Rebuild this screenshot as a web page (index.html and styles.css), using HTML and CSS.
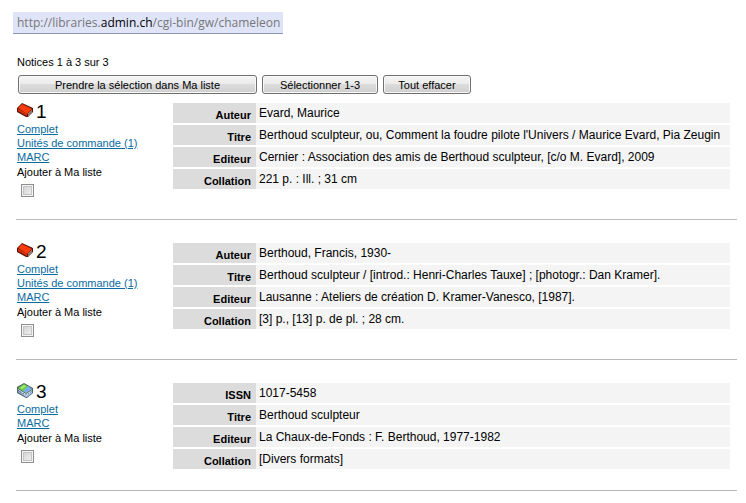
FILE: index.html
```html
<!DOCTYPE html>
<html lang="fr">
<head>
  <meta charset="UTF-8">
  <meta name="viewport" content="width=device-width, initial-scale=1.0">
  <title>Notices</title>
  <link rel="stylesheet" href="styles.css">
</head>
<body>
  <svg class="defs" width="0" height="0">
    <!-- closed red book -->
    <symbol id="book" viewBox="0 0 16 16">
      <path d="M0 6 L5 1 L16 6 L16 10 L11 15 L9 15 L0 10 Z" fill="#5a1408"/>
      <path d="M1 6 L5 2 L15 7 L10 12 Z" fill="#fc3c0c"/>
      <path d="M1 7 L10 12 L10 14 L1 9 Z" fill="#e83008"/>
      <path d="M11 12 L15 8 L15 10 L11 14 Z" fill="#e8dcd8"/>
      <path d="M11 13 L15 9" stroke="#777" fill="none"/>
    </symbol>
    <!-- stack of periodical issues -->
    <symbol id="serial" viewBox="0 0 16 16">
      <path d="M0 5 L7 1 L16 6 L16 11 L10 16 L9 16 L0 11 Z" fill="#4c6468"/>
      <path d="M1 9 L9 14 L15 9 L15 11 L10 15 L9 15 L1 10 Z" fill="#a8c8f8"/>
      <path d="M1 7 L9 12 L15 8 L15 9 L9 14 L1 8 Z" fill="#f4f8ff"/>
      <path d="M1 6 L7 2 L15 7 L9 11 Z" fill="#70d040"/>
      <path d="M11 4 L15 7 L9 11 L6 9 Z" fill="#78acf0"/>
      <path d="M3 6 L7 3 L9 4 L5 7 Z" fill="#a4ec70"/>
      <path d="M1 8 L9 13 L15 9" stroke="#567" stroke-dasharray="1 1" fill="none"/>
    </symbol>
  </svg>

  <div class="address">http://libraries.<b>admin.ch</b>/cgi-bin/gw/chameleon</div>

  <form class="results">
    <p class="count">Notices 1 à 3 sur 3</p>
    <div class="actions">
      <button type="button" class="btn-wide">Prendre la sélection dans Ma liste</button>
      <button type="button">Sélectionner 1-3</button>
      <button type="button">Tout effacer</button>
    </div>

    <div class="record">
      <div class="side">
        <div class="number"><svg class="icon"><use href="#book"/></svg>1</div>
        <a href="#">Complet</a>
        <a href="#">Unités de commande (1)</a>
        <a href="#">MARC</a>
        <label for="sel1">Ajouter à Ma liste</label>
        <input type="checkbox" id="sel1">
      </div>
      <table class="fields">
        <tr><th>Auteur</th><td>Evard, Maurice</td></tr>
        <tr><th>Titre</th><td>Berthoud sculpteur, ou, Comment la foudre pilote l'Univers / Maurice Evard, Pia Zeugin</td></tr>
        <tr><th>Editeur</th><td>Cernier : Association des amis de Berthoud sculpteur, [c/o M. Evard], 2009</td></tr>
        <tr><th>Collation</th><td>221 p. : Ill. ; 31 cm</td></tr>
      </table>
    </div>

    <div class="record">
      <div class="side">
        <div class="number"><svg class="icon"><use href="#book"/></svg>2</div>
        <a href="#">Complet</a>
        <a href="#">Unités de commande (1)</a>
        <a href="#">MARC</a>
        <label for="sel2">Ajouter à Ma liste</label>
        <input type="checkbox" id="sel2">
      </div>
      <table class="fields">
        <tr><th>Auteur</th><td>Berthoud, Francis, 1930-</td></tr>
        <tr><th>Titre</th><td>Berthoud sculpteur / [introd.: Henri-Charles Tauxe] ; [photogr.: Dan Kramer].</td></tr>
        <tr><th>Editeur</th><td>Lausanne : Ateliers de création D. Kramer-Vanesco, [1987].</td></tr>
        <tr><th>Collation</th><td>[3] p., [13] p. de pl. ; 28 cm.</td></tr>
      </table>
    </div>

    <div class="record">
      <div class="side">
        <div class="number"><svg class="icon"><use href="#serial"/></svg>3</div>
        <a href="#">Complet</a>
        <a href="#">MARC</a>
        <label for="sel3">Ajouter à Ma liste</label>
        <input type="checkbox" id="sel3">
      </div>
      <table class="fields">
        <tr><th>ISSN</th><td>1017-5458</td></tr>
        <tr><th>Titre</th><td>Berthoud sculpteur</td></tr>
        <tr><th>Editeur</th><td>La Chaux-de-Fonds : F. Berthoud, 1977-1982</td></tr>
        <tr><th>Collation</th><td>[Divers formats]</td></tr>
      </table>
    </div>
  </form>
</body>
</html>
```

FILE: styles.css
```css
body {
    margin: 0;
    padding: 12px 9px 0 13px;
    background-color: #fff;
    color: #000;
    font-family: "Liberation Sans", Arial, sans-serif;
    font-size: 11px;
    line-height: 14px;
}

.defs {
    display: block;
}

.address {
    width: fit-content;
    padding: 0 3px 0 4px;
    border-bottom: 1px solid #9094b4;
    background-color: #dfe4f8;
    color: #777;
    font-family: "Open Sans", "Noto Sans", sans-serif;
    font-size: 12px;
    line-height: 21px;
}

.address b {
    color: #000;
    font-weight: normal;
}

.results {
    padding-left: 3px;
}

.count {
    margin: 21px 0 6px;
    padding-left: 1px;
}

.actions {
    display: flex;
    gap: 5px;
    padding-left: 2px;
    margin-bottom: 8px;
}

button {
    height: 19px;
    padding: 0 14px;
    border: 1px solid #707070;
    border-radius: 3px;
    background: linear-gradient(#f4f4f4, #ebebeb 50%, #dcdcdc 50%, #cfcfcf);
    box-shadow: inset 0 0 0 1px #f8f8f8;
    color: #000;
    font-family: inherit;
    font-size: 11px;
    line-height: 14px;
}

button:hover {
    border-color: #3c7fb1;
}

.actions button {
    min-width: 88px;
}

.actions .btn-wide {
    width: 239px;
}

.actions .btn-wide + button {
    width: 116px;
}

.record {
    display: flex;
    align-items: flex-start;
    padding-bottom: 21px;
    margin-bottom: 22px;
    border-bottom: 1px solid #b8b8b8;
}

.side {
    display: flex;
    flex-direction: column;
    align-items: flex-start;
    width: 156px;
    padding-left: 1px;
    flex-shrink: 0;
}

.number {
    display: flex;
    gap: 3px;
    margin-bottom: 1px;
    font-size: 19px;
    line-height: 19px;
}

.icon {
    width: 16px;
    height: 16px;
}

.side a {
    color: #0a6ca0;
    text-decoration: underline;
}

.side a:hover {
    color: #000;
}

.side label {
    margin-top: 1px;
}

.side input {
    appearance: none;
    width: 13px;
    height: 13px;
    margin: 5px 4px 1px;
    border: 1px solid #8e8f8f;
    background: linear-gradient(135deg, #cdcdcd, #f6f6f6);
    box-shadow: inset 0 0 0 1px #f4f4f4, inset 0 0 0 2px #c4c4c4;
}

.side input:checked {
    background: #0a6ca0;
}

.fields {
    flex: 1;
    margin: 1px 7px 0 0;
    border-collapse: separate;
    border-spacing: 0;
}

.fields tr + tr th,
.fields tr + tr td {
    border-top: 2px solid #fff;
}

.fields th {
    width: 64px;
    height: 16px;
    padding: 4px 5px 0 14px;
    background-color: #dcdcdc;
    background-clip: padding-box;
    font-size: 11px;
    line-height: 16px;
    text-align: right;
}

.fields td {
    height: 18px;
    padding: 1px 1px 1px 3px;
    background-color: #f4f4f4;
    background-clip: padding-box;
    font-size: 12px;
    line-height: 18px;
}
```
